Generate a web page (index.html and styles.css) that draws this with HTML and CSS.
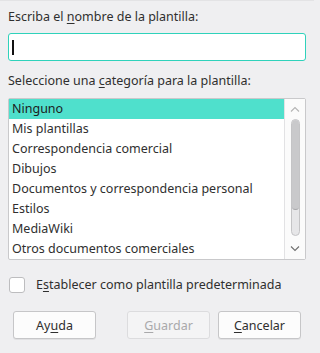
FILE: index.html
```html
<!DOCTYPE html>
<html lang="es">
<head>
<meta charset="utf-8">
<title>Guardar como plantilla</title>
<link rel="stylesheet" href="styles.css">
</head>
<body>
<div class="dialog">
  <div class="label">Escriba el <u>n</u>ombre de la plantilla:</div>
  <div class="input"><span class="caret"></span></div>
  <div class="label label-cat">Seleccione una <u>c</u>ategoría para la plantilla:</div>
  <div class="listbox">
    <ul class="items">
      <li class="item selected">Ninguno</li>
      <li class="item">Mis plantillas</li>
      <li class="item">Correspondencia comercial</li>
      <li class="item">Dibujos</li>
      <li class="item">Documentos y correspondencia personal</li>
      <li class="item">Estilos</li>
      <li class="item">MediaWiki</li>
      <li class="item">Otros documentos comerciales</li>
    </ul>
    <div class="scrollbar">
      <svg class="arrow arrow-up" width="10" height="6" viewBox="0 0 10 6"><path d="M1 5.5 L5 1.5 L9 5.5" fill="none" stroke="#b4b4b4" stroke-width="1.1"/></svg>
      <div class="track"><div class="thumb"></div></div>
      <svg class="arrow arrow-down" width="10" height="6" viewBox="0 0 10 6"><path d="M1 0.5 L5 4.5 L9 0.5" fill="none" stroke="#6e6e6e" stroke-width="1.1"/></svg>
    </div>
  </div>
  <label class="check-row">
    <span class="checkbox"></span>
    <span class="check-label">E<u>s</u>tablecer como plantilla predeterminada</span>
  </label>
  <div class="buttons">
    <div class="btn">Ay<u>u</u>da</div>
    <div class="btn-group">
      <div class="btn disabled"><u>G</u>uardar</div>
      <div class="btn"><u>C</u>ancelar</div>
    </div>
  </div>
</div>
</body>
</html>
```

FILE: styles.css
```css
html, body {
  margin: 0;
  padding: 0;
  background: #efeff1;
}

body {
  width: 314px;
  height: 353px;
  border-top: 1px solid #e3e3e5;
  box-sizing: border-box;
  font-family: "Noto Sans", "Open Sans", sans-serif;
  font-size: 12.5px;
  color: #2f2f2f;
}

u {
  text-decoration: underline;
  text-underline-offset: 2px;
  text-decoration-thickness: 1px;
}

.dialog {
  padding: 7px 8px 0 8px;
  display: flex;
  flex-direction: column;
}

.label {
  height: 18px;
  line-height: 18px;
}

.input {
  margin-top: 7px;
  height: 28px;
  box-sizing: border-box;
  background: #ffffff;
  border: 1px solid #2fd2bb;
  border-radius: 3px;
  display: flex;
  align-items: center;
  padding-left: 3px;
}

.caret {
  width: 2px;
  height: 15px;
  background: #111;
}

.label-cat {
  margin-top: 11px;
}

.listbox {
  margin-top: 8px;
  height: 162px;
  box-sizing: border-box;
  background: #ffffff;
  border: 1px solid #c9c9cb;
  border-radius: 2px;
  display: flex;
}

.items {
  list-style: none;
  margin: 0;
  padding: 0;
  flex: 1;
}

.item {
  height: 20px;
  line-height: 19px;
  padding-left: 3px;
  white-space: nowrap;
  overflow: hidden;
}

.item.selected {
  background: #4fe0cc;
  color: #1c1c1c;
}

.scrollbar {
  width: 20px;
  border-left: 1px solid #e2e2e4;
  background: #fbfbfb;
  display: flex;
  flex-direction: column;
  align-items: center;
}

.arrow {
  display: block;
}

.arrow-up {
  margin-top: 7px;
}

.track {
  margin-top: 7px;
  width: 9px;
  height: 117px;
  box-sizing: border-box;
  border: 1px solid #c4c4c6;
  border-radius: 5px;
  background: #e6e6e8;
  overflow: hidden;
}

.thumb {
  height: 90px;
  box-sizing: border-box;
  border-bottom: 1px solid #a8a8aa;
  border-radius: 4px;
  background: #c9c9cb;
}

.arrow-down {
  margin-top: 10px;
}

.check-row {
  margin-top: 16px;
  height: 18px;
  display: flex;
  align-items: center;
  padding-left: 1px;
}

.checkbox {
  width: 16px;
  height: 16px;
  box-sizing: border-box;
  background: #ffffff;
  border: 1px solid #bdbdbf;
  border-radius: 3px;
}

.check-label {
  margin-left: 11px;
  line-height: 18px;
}

.buttons {
  margin-top: 17px;
  padding: 0 5px;
  display: flex;
  justify-content: space-between;
}

.btn-group {
  display: flex;
  gap: 8px;
}

.btn {
  width: 83px;
  height: 28px;
  box-sizing: border-box;
  background: #fcfcfc;
  border: 1px solid #c6c6c8;
  border-radius: 3px;
  box-shadow: 0 1px 0 rgba(0, 0, 0, 0.06);
  display: flex;
  align-items: center;
  justify-content: center;
  color: #2f2f2f;
}

.btn.disabled {
  background: #f4f4f5;
  border-color: #dcdcde;
  color: #a9a9ab;
  box-shadow: none;
}
```
